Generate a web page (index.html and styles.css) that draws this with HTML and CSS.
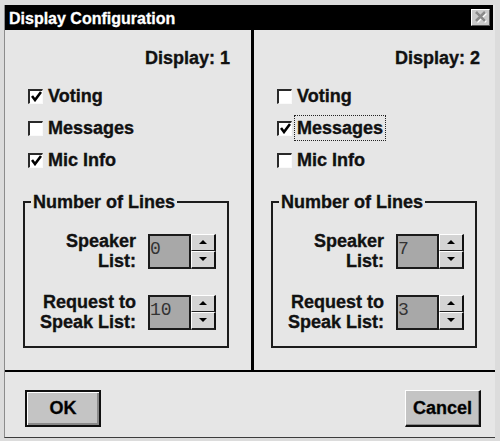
FILE: index.html
```html
<!DOCTYPE html>
<html lang="en">
<head>
    <meta charset="UTF-8">
    <title>Display Configuration</title>
    <link rel="stylesheet" href="styles.css">
</head>
<body>
    <div class="window">
        <div class="dialog">
            <div class="title-bar">
                <span class="title-text">Display Configuration</span>
                <span class="close-btn">
                    <svg width="17" height="15" viewBox="0 0 17 15">
                        <path d="M5 3 L14 12 M14 3 L5 12" stroke="#fff" stroke-width="2.6"/>
                        <path d="M4 2 L13 11 M13 2 L4 11" stroke="#8a8a8a" stroke-width="2.6"/>
                    </svg>
                </span>
            </div>

            <div class="main">
                <div class="panel panel-left">
                    <div class="display-label">Display: 1</div>
                    <div class="checks">
                        <div class="check"><span class="box"><svg width="11" height="11" viewBox="0 0 11 11"><path d="M1 5 L4 9 L10 1" fill="none" stroke="#000" stroke-width="2.6"/></svg></span><span>Voting</span></div>
                        <div class="check"><span class="box"></span><span>Messages</span></div>
                        <div class="check"><span class="box"><svg width="11" height="11" viewBox="0 0 11 11"><path d="M1 5 L4 9 L10 1" fill="none" stroke="#000" stroke-width="2.6"/></svg></span><span>Mic Info</span></div>
                    </div>
                    <fieldset class="group">
                        <legend>Number of Lines</legend>
                        <div class="field-row">
                            <div class="field-label">Speaker<br>List:</div>
                            <div class="edit">0</div>
                            <div class="spin">
                                <div class="spin-btn"><span class="arrow-up"></span></div>
                                <div class="spin-btn"><span class="arrow-down"></span></div>
                            </div>
                        </div>
                        <div class="field-row">
                            <div class="field-label">Request to<br>Speak List:</div>
                            <div class="edit">10</div>
                            <div class="spin">
                                <div class="spin-btn"><span class="arrow-up"></span></div>
                                <div class="spin-btn"><span class="arrow-down"></span></div>
                            </div>
                        </div>
                    </fieldset>
                </div>

                <div class="divider"></div>

                <div class="panel panel-right">
                    <div class="display-label">Display: 2</div>
                    <div class="checks">
                        <div class="check"><span class="box"></span><span>Voting</span></div>
                        <div class="check"><span class="box"><svg width="11" height="11" viewBox="0 0 11 11"><path d="M1 5 L4 9 L10 1" fill="none" stroke="#000" stroke-width="2.6"/></svg></span><span class="focus">Messages</span></div>
                        <div class="check"><span class="box"></span><span>Mic Info</span></div>
                    </div>
                    <fieldset class="group">
                        <legend>Number of Lines</legend>
                        <div class="field-row">
                            <div class="field-label">Speaker<br>List:</div>
                            <div class="edit">7</div>
                            <div class="spin">
                                <div class="spin-btn"><span class="arrow-up"></span></div>
                                <div class="spin-btn"><span class="arrow-down"></span></div>
                            </div>
                        </div>
                        <div class="field-row">
                            <div class="field-label">Request to<br>Speak List:</div>
                            <div class="edit">3</div>
                            <div class="spin">
                                <div class="spin-btn"><span class="arrow-up"></span></div>
                                <div class="spin-btn"><span class="arrow-down"></span></div>
                            </div>
                        </div>
                    </fieldset>
                </div>
            </div>

            <div class="hline"></div>

            <div class="footer">
                <button class="btn btn-default">OK</button>
                <button class="btn btn-cancel">Cancel</button>
            </div>
        </div>
    </div>
</body>
</html>
```

FILE: styles.css
```css
body {
    margin: 0;
    font-family: "Liberation Sans", Arial, sans-serif;
    color: #111;
}
.window {
    width: 500px;
    height: 441px;
    box-sizing: border-box;
    padding: 5px 5px 3px 4px;
    background: #dcdcdc;
}
.dialog {
    height: 100%;
    display: flex;
    flex-direction: column;
    background: #e6e6e6;
    border-left: 1px solid #8c8c8c;
    border-bottom: 1px solid #3c3c3c;
    box-sizing: border-box;
}
.title-bar {
    height: 25px;
    flex: none;
    margin-right: 2px;
    background: #000;
    color: #fff;
    display: flex;
    align-items: center;
    justify-content: space-between;
    padding: 0 3px 0 4px;
    font-size: 16px;
    font-weight: bold;
}
.title-text {
    line-height: 18px;
    padding-top: 2px;
    -webkit-text-stroke: 0.3px #fff;
}
.close-btn {
    width: 19px;
    height: 17px;
    box-sizing: border-box;
    background: #cacaca;
    border: 1px solid;
    border-color: #fff #555 #555 #fff;
}
.close-btn svg {
    display: block;
}
.main {
    flex: none;
    height: 340px;
    display: flex;
}
.panel {
    box-sizing: border-box;
    padding-top: 18px;
}
.panel-left {
    width: 246px;
    padding-left: 18px;
    padding-right: 21px;
}
.panel-right {
    width: 241px;
    padding-left: 17px;
    padding-right: 15px;
}
.divider {
    width: 3px;
    background: #000;
}
.display-label,
.check,
.group legend,
.field-label,
.btn {
    -webkit-text-stroke: 0.35px #111;
}
.display-label {
    font-size: 18px;
    font-weight: bold;
    line-height: 20px;
    text-align: right;
}
.checks {
    display: flex;
    flex-direction: column;
    gap: 12px;
    margin: 18px 0 22px 5px;
}
.panel-right .checks {
    margin-left: 6px;
}
.check {
    display: flex;
    align-items: center;
    gap: 5px;
    height: 20px;
    font-size: 18px;
    font-weight: bold;
    line-height: 20px;
}
.box {
    width: 15px;
    height: 15px;
    box-sizing: border-box;
    background: #fff;
    border-top: 2px solid #2a2a2a;
    border-left: 2px solid #2a2a2a;
    border-right: 1px solid #fafafa;
    border-bottom: 1px solid #fafafa;
    display: flex;
    align-items: center;
    justify-content: center;
}
.box svg {
    display: block;
}
.focus {
    outline: 1px dotted #222;
    outline-offset: 2px;
}
.group {
    width: 206px;
    min-width: 0;
    box-sizing: border-box;
    margin: 0;
    border: 2px solid #1c1c1c;
    padding: 19px 11px 14px 6px;
}
.group legend {
    padding: 0 2px;
    font-size: 18px;
    font-weight: bold;
    line-height: 20px;
}
.field-row {
    display: flex;
    justify-content: flex-end;
    align-items: center;
    height: 40px;
}
.field-row + .field-row {
    margin-top: 21px;
}
.field-label {
    margin-right: 12px;
    text-align: right;
    font-size: 18px;
    font-weight: bold;
    line-height: 20px;
}
.edit {
    width: 43px;
    height: 35px;
    box-sizing: border-box;
    border: 2px solid #1a1a1a;
    background: #a8a8a8;
    padding: 3px 0 0 0;
    font-family: "Liberation Mono", "Courier New", monospace;
    font-size: 18px;
    line-height: 20px;
    color: #333;
}
.spin {
    width: 25px;
    height: 35px;
    display: flex;
    flex-direction: column;
}
.spin-btn {
    flex: 1;
    background: #d4d4d4;
    border-top: 1px solid #fff;
    border-left: 1px solid #fff;
    border-right: 2px solid #111;
    border-bottom: 1px solid #222;
    display: flex;
    align-items: center;
    justify-content: center;
}
.spin-btn:last-child {
    border-bottom-width: 2px;
}
.arrow-up, .arrow-down {
    width: 0;
    height: 0;
    border-left: 4px solid transparent;
    border-right: 4px solid transparent;
}
.arrow-up {
    border-bottom: 4px solid #000;
}
.arrow-down {
    border-top: 4px solid #000;
}
.hline {
    flex: none;
    height: 2px;
    background: #000;
}
.footer {
    flex: 1;
    display: flex;
    justify-content: space-between;
    align-items: flex-start;
    padding: 18px 14px 0 20px;
}
.btn {
    width: 76px;
    height: 37px;
    box-sizing: border-box;
    padding: 0;
    font-family: "Liberation Sans", Arial, sans-serif;
    font-size: 18px;
    font-weight: bold;
    color: #000;
    background: #c4c4c4;
}
.btn-default {
    border: 2px solid #111;
    box-shadow: inset 1px 1px #fff, inset -2px -2px #8a8a8a;
}
.btn-cancel {
    border-style: solid;
    border-width: 1px 2px 2px 1px;
    border-color: #fff #111 #111 #fff;
    box-shadow: inset -1px -1px #8a8a8a;
}
```
